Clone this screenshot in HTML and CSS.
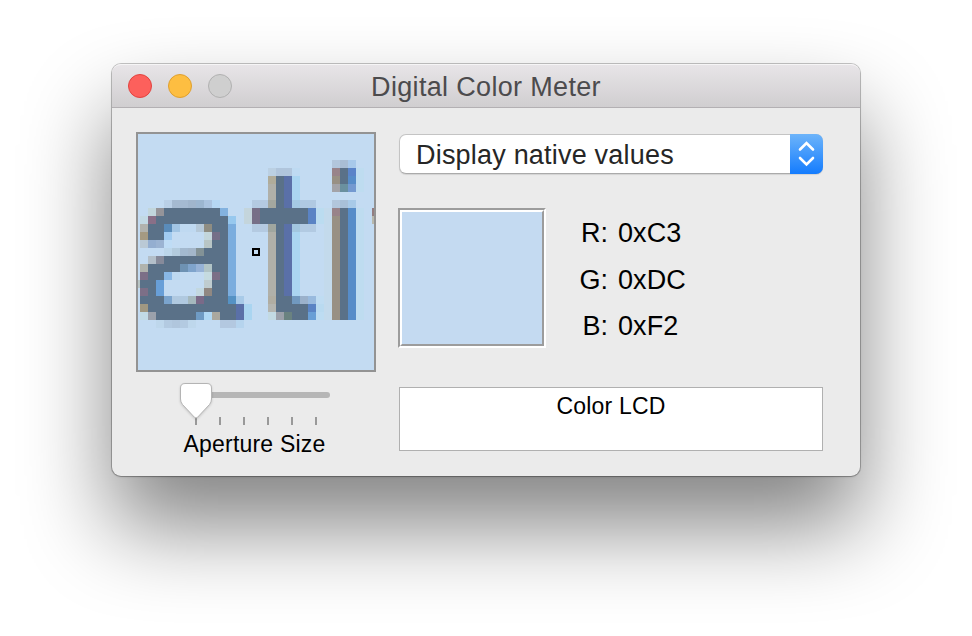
FILE: index.html
```html
<!DOCTYPE html>
<html lang="en">
<head>
<meta charset="utf-8">
<title>Digital Color Meter</title>
<link rel="stylesheet" href="styles.css">
</head>
<body>
<main class="window">
  <header class="titlebar">
    <div class="lights"><i class="light close"></i><i class="light minimize"></i><i class="light disabled"></i></div>
    <h1 class="title"><span>Digital Color Meter</span></h1>
  </header>
  <div class="content">
    <section class="left">
      <svg class="loupe" id="loupe" viewBox="-0.25 -8.25 29.5 29.5" shape-rendering="crispEdges"></svg>
      <svg class="slider" viewBox="0 0 156 48">
        <rect x="4" y="11" width="146" height="6" rx="3" fill="#b6b6b6"/>
        <path d="M16 36v8M40 36v8M64 36v8M88 36v8M112 36v8M136 36v8" stroke="#999" stroke-width="2"/>
        <path class="thumb" d="M5 2.500H27Q31.500 2.500 31.500 7V18Q31.500 21 29.500 23.500L17.500 36.300Q16 37.800 14.500 36.300L2.500 23.500Q.5 21 .5 18V7Q.5 2.500 5 2.500Z"/>
      </svg>
      <div class="aperture">Aperture Size</div>
    </section>
    <section class="right">
      <div class="popup"><span class="popup-text">Display native values</span>
        <div class="arrows"><svg viewBox="0 0 33 40"><path d="M10 15.500l6.500-6.500 6.500 6.500M10 24l6.500 6.500 6.500-6.500" fill="none" stroke="#fff" stroke-width="2.600" stroke-linecap="round"/></svg></div>
      </div>
      <div class="sample">
        <div class="well"><div class="swatch"></div></div>
        <dl class="values">
          <dt>R:</dt><dd>0xC3</dd>
          <dt>G:</dt><dd>0xDC</dd>
          <dt>B:</dt><dd>0xF2</dd>
        </dl>
      </div>
      <div class="display">Color LCD</div>
    </section>
  </div>
</main>
<script src="loupe.js"></script>
</body>
</html>
```
FILE: styles.css
```css
* { box-sizing: border-box; }
body {
  margin: 0;
  padding: 64px 0 0 112px;
  height: 636px;
  overflow: hidden;
  background: #fff;
  color: #000;
  font-family: "Liberation Sans", Arial, sans-serif;
}
.window {
  width: 748px;
  height: 412px;
  border-radius: 9px;
  background: #ebebeb;
  box-shadow: 0 0 0 1px rgba(0, 0, 0, .22), 0 1px 2px rgba(0, 0, 0, .18), 0 50px 88px rgba(0, 0, 0, .49);
}
.titlebar {
  display: grid;
  grid-template-columns: 1fr auto 1fr;
  align-items: center;
  height: 44px;
  padding: 0 16px;
  border-radius: 9px 9px 0 0;
  border-bottom: 1px solid #b3b0b3;
  background: linear-gradient(#e8e5e8, #d0ced0);
  box-shadow: inset 0 2px 0 -1px #f6f5f6;
}
.lights { display: flex; gap: 16px; }
.light { width: 24px; height: 24px; border-radius: 50%; border: 1px solid; }
.close { background: #fd605c; border-color: #e2433f; }
.minimize { background: #fdbe41; border-color: #dfa02f; }
.disabled { background: #cfcfcf; border-color: #b1b1b1; }
.title {
  margin: 2px 0 0;
  font-size: 27px;
  font-weight: 400;
  line-height: 30px;
  letter-spacing: .33px;
  color: #4c4b4d;
}
.content {
  display: flex;
  gap: 23px;
  padding: 24px 37px 0 24px;
}
.left { display: flex; flex-direction: column; width: 240px; }
.loupe { width: 240px; height: 240px; border: 2px solid #939393; background: #c3dbf2; }
.slider { width: 156px; height: 48px; margin: 9px 0 0 44px; overflow: visible; }
.thumb { fill: #fff; stroke: #b4b4b4; filter: drop-shadow(0 1px 1px rgba(0, 0, 0, .16)); }
.aperture { margin: 2px 0 0 -3px; text-align: center; font-size: 23px; line-height: 26px; letter-spacing: .2px; white-space: nowrap; }
.right { width: 424px; }
.popup {
  display: flex;
  justify-content: space-between;
  height: 40px;
  margin-top: 2px;
  border-radius: 7px;
  border: 1px solid #c4c4c4;
  border-bottom-color: #aaa;
  background: #fff;
  box-shadow: 0 1px 1px rgba(0, 0, 0, .1);
}
.popup-text { padding-left: 16px; font-size: 27px; line-height: 40px; letter-spacing: .2px; color: #262626; }
.arrows {
  width: 33px;
  height: 40px;
  margin: -1px -1px 0 0;
  border-radius: 0 7px 7px 0;
  background: linear-gradient(#6db4fa, #147cfe);
}
.arrows svg { display: block; width: 33px; height: 40px; }
.sample { display: flex; height: 140px; margin-top: 34px; }
.well {
  width: 148px;
  height: 140px;
  margin-left: -1px;
  border: 2px solid;
  border-color: #9c9c9c #fff #fff #9c9c9c;
}
.swatch {
  height: 136px;
  border: 2px solid;
  border-color: #fff #9c9c9c #9c9c9c #fff;
  background: #c4daf1;
}
.values {
  display: grid;
  grid-template-columns: 30px auto;
  grid-auto-rows: 46.5px;
  column-gap: 10px;
  margin: 2px 0 0 32px;
  font-size: 27px;
  line-height: 46px;
}
.values dt { text-align: right; }
.values dd { margin: 0; letter-spacing: .1px; }
.display {
  height: 64px;
  margin-top: 39px;
  padding-top: 5px;
  border: 1px solid #b0b0b0;
  background: #fff;
  text-align: center;
  font-size: 23px;
  line-height: 27px;
  letter-spacing: .2px;
}
```
FILE: loupe.js
```js
// Magnified pixels. Each run is [column, row, width, height, colour].
const ink = "#5a7188", indigo = "#5a70a8", sky = "#aad5f1", blue = "#7badde";
const runs = [
  // letter a
  [3,0,1,1,"#bad0e7"],[4,0,2,1,"#a5bad1"],[6,0,1,1,"#a0b5cc"],[7,0,1,1,"#9cb6d0"],[8,0,1,1,"#aac3df"],[9,0,1,1,"#b5d7f3"],
  [1,1,1,1,"#c2d6dc"],[2,1,1,1,"#959499"],[3,1,7,1,ink],[10,1,1,1,"#83b2df"],
  [0,2,1,1,"#c2d9e4"],[1,2,1,1,"#896f87"],[2,2,9,1,ink],[11,2,1,1,"#97c8ee"],
  [0,3,1,1,"#b1b2ad"],[1,3,2,2,ink],[3,3,1,1,"#5a8cba"],[4,3,1,1,"#a2c5e4"],[5,3,2,1,"#bfd9f1"],[7,3,1,1,"#b5c8d8"],[8,3,1,1,"#8f8d82"],[9,3,2,1,ink],
  [11,3,1,9,blue],
  [0,4,1,1,"#a59a82"],[3,4,1,1,"#a1cbf0"],[8,4,1,1,"#c3d6db"],[9,4,1,1,"#756f88"],[10,4,1,1,ink],
  [0,5,1,1,"#bac9d5"],[1,5,1,1,"#94aed0"],[2,5,1,1,"#9bb3d2"],[3,5,1,1,"#bfdcf5"],[8,5,1,1,"#b8c5c5"],[9,5,2,1,ink],
  [3,6,1,1,"#bcd6ea"],[4,6,1,1,"#b3cbdd"],[5,6,1,1,"#a3b9cf"],[6,6,1,1,"#a3b6ca"],[7,6,1,1,"#839296"],[8,6,3,1,ink],
  [1,7,1,1,"#b3bfc9"],[2,7,1,1,"#868a9a"],[3,7,8,1,ink],
  [0,8,1,1,"#b0b3ad"],[1,8,4,1,ink],[5,8,1,1,"#6e92b3"],[6,8,1,1,"#7fa4cc"],[7,8,1,1,"#96b2d6"],[8,8,1,1,"#b1c4c6"],[9,8,2,1,ink],
  [0,9,1,1,"#7c6f87"],[1,9,2,1,ink],[3,9,1,1,"#88b7e5"],[4,9,1,1,"#bdd8f0"],[8,9,1,1,"#c5dbe0"],[9,9,1,1,"#7c6f87"],[10,9,1,1,ink],
  [-1,10,1,1,"#b8c5c5"],[0,10,2,1,ink],[2,10,1,2,"#689fd8"],[8,10,1,1,"#bfcccf"],[9,10,2,2,ink],
  [0,11,1,1,"#7c6f87"],[1,11,1,1,ink],[7,11,1,1,"#c3d8e0"],[8,11,1,1,"#908882"],
  [0,12,3,1,ink],[3,12,1,1,"#7ba4cd"],[4,12,2,1,"#b0c9e0"],[6,12,1,1,"#a5b8bd"],[7,12,1,1,"#7a6a88"],[8,12,3,1,ink],[11,12,1,1,"#5592c4"],[12,12,1,1,"#a8cae8"],
  [0,13,1,1,"#a09882"],[1,13,11,1,ink],[12,13,1,2,indigo],[13,13,1,2,sky],
  [0,14,1,1,"#c2dbe6"],[1,14,1,1,"#9ba1ab"],[2,14,5,1,ink],[7,14,1,1,"#6f9bc4"],[8,14,1,1,"#afd8f5"],[9,14,1,1,"#aaa89f"],[10,14,2,1,ink],
  [2,15,1,1,"#bed7ec"],[3,15,1,1,"#b3cae1"],[4,15,1,1,"#b0c6dd"],[5,15,1,1,"#b3cae1"],[6,15,1,1,"#bed7ec"],[10,15,2,1,"#b3c8e0"],[12,15,1,1,"#b6d4ee"],
  // letter t
  [16,-4,1,1,"#bbd0e3"],[17,-4,2,1,"#b0c5dc"],[19,-4,1,1,"#bedaf2"],
  [16,-3,1,16,"#b0b0a9"],[17,-3,1,17,ink],[18,-3,1,15,indigo],[19,-3,1,15,sky],[16,-3,1,1,"#b0ac9a"],
  [14,0,2,1,"#b4cae1"],[16,0,1,1,"#a3a79f"],[19,0,1,1,"#a4c9e4"],[20,0,2,1,"#b0c9e2"],
  [13,1,1,2,"#c4d5dc"],[14,1,1,2,"#776f87"],[15,1,6,2,ink],[21,1,1,2,"#5a83c4"],[22,1,1,2,"#bbdcf0"],
  [14,3,2,1,"#b4cae1"],[16,3,1,1,"#a0a69f"],[19,3,1,1,"#a2c6df"],[20,3,2,1,"#b2cae2"],
  [16,12,1,1,"#b0ada2"],[18,12,1,1,ink],[19,12,1,1,"#7199bf"],[20,12,1,1,"#9bb1cb"],[21,12,1,1,"#99bade"],[22,12,1,1,"#bfdcf2"],
  [16,13,1,1,"#b4b5b0"],[17,13,4,1,ink],[21,13,1,1,"#5a83c4"],[22,13,1,1,"#b9daf0"],
  [16,14,1,1,"#c3dae3"],[17,14,1,1,"#9ba0aa"],[18,14,1,1,"#6a8280"],[19,14,2,1,ink],[21,14,1,1,"#699fd6"],[22,14,1,1,"#bddcf2"],
  // letter i
  [24,-5,1,1,"#b2c6dc"],[25,-5,1,1,"#a8bdd4"],[26,-5,1,1,"#a8c9ea"],
  [24,-4,1,1,"#98838a"],[25,-4,1,2,ink],[26,-4,1,1,"#5a83c8"],
  [24,-3,1,1,"#989084"],[26,-3,1,1,"#568cc8"],
  [24,-2,1,1,"#a3a3a8"],[25,-2,1,1,"#6a909f"],[26,-2,1,1,"#7399d0"],[27,-4,1,3,"#bedcf0"],
  [24,0,1,1,"#b2c6dc"],[25,0,1,1,"#a8c0d8"],[26,0,1,1,"#a8cae8"],
  [23,1,1,14,"#c3daec"],[24,1,1,14,"#989084"],[25,1,1,14,ink],[26,1,1,14,"#568cc8"],[27,1,1,14,"#bedcf0"],
  [24,1,1,1,"#98838a"],
  // edge of the next letter
  [29,1,1,1,"#937d80"],[29,2,1,1,"#b8b8ac"],
  // aperture marker
  [14,6,1,1,"#000"],[14.25,6.25,.5,.5,"#c3dbf2"]
];
const loupe = document.getElementById("loupe");
for (const [x, y, width, height, fill] of runs) {
  const cell = document.createElementNS("http://www.w3.org/2000/svg", "rect");
  Object.entries({ x, y, width, height, fill }).forEach(([k, v]) => cell.setAttribute(k, v));
  loupe.append(cell);
}
```
